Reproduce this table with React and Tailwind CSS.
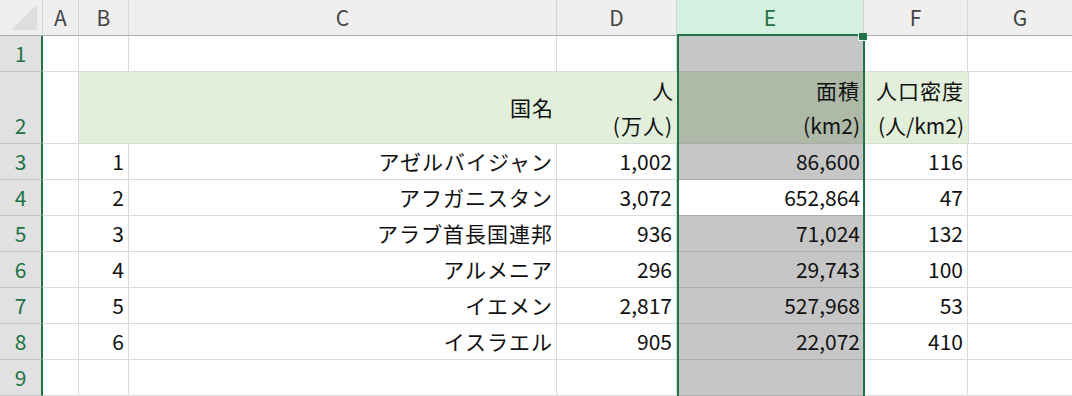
import React from "react";

const rows = [
  { no: 1, name: "アゼルバイジャン", pop: "1,002", area: "86,600", dens: "116" },
  { no: 2, name: "アフガニスタン", pop: "3,072", area: "652,864", dens: "47", active: true },
  { no: 3, name: "アラブ首長国連邦", pop: "936", area: "71,024", dens: "132" },
  { no: 4, name: "アルメニア", pop: "296", area: "29,743", dens: "100" },
  { no: 5, name: "イエメン", pop: "2,817", area: "527,968", dens: "53" },
  { no: 6, name: "イスラエル", pop: "905", area: "22,072", dens: "410" },
];

const RowHead = ({ n, tall }) => (
  <div
    className={`w-[43px] shrink-0 ${tall ? "h-[72px]" : "h-[36px]"} bg-[#e1e1e1] border-r-2 border-r-[#217346] border-b border-b-[#c6c6c6] text-[#217346] flex items-end justify-center leading-[35px]`}
  >
    {n}
  </div>
);

const ColHead = ({ label, w, selected }) => (
  <div
    className={`${w} h-[36px] shrink-0 border-r border-r-[#d6d6d6] border-b border-b-[#acacac] flex items-center justify-center ${
      selected ? "bg-[#d3f0e0] text-[#217346]" : "bg-[#efefef] text-[#444444]"
    }`}
  >
    {label}
  </div>
);

// empty row (row 1 and row 9)
const BlankRow = ({ n }) => (
  <div className="flex h-[36px]">
    <RowHead n={n} />
    <div className="w-[36px] border-r border-b border-[#dadada]" />
    <div className="w-[50px] border-r border-b border-[#dadada]" />
    <div className="w-[428px] border-r border-b border-[#dadada]" />
    <div className="w-[120px] border-r border-b border-[#dadada]" />
    <div className="w-[187px] bg-[#c6c6c6] border-b border-b-[#adadad]" />
    <div className="w-[104px] border-r border-b border-[#dadada]" />
    <div className="flex-1 border-b border-[#dadada]" />
  </div>
);

export default function App() {
  return (
    <div className="relative w-[1072px] h-[396px] overflow-hidden bg-white text-[#111111] text-[21px] font-['Noto_Sans_CJK_JP','Noto_Sans',sans-serif]">
      {/* column headings */}
      <div className="flex">
        <div className="w-[43px] h-[36px] shrink-0 bg-[#efefef] border-r border-r-[#d6d6d6] border-b border-b-[#acacac] flex items-end justify-end p-[4px]">
          <svg width="28" height="28" viewBox="0 0 28 28">
            <polygon points="27,1 27,27 1,27" fill="#dedede" />
          </svg>
        </div>
        <ColHead label="A" w="w-[36px]" />
        <ColHead label="B" w="w-[50px]" />
        <ColHead label="C" w="w-[428px]" />
        <ColHead label="D" w="w-[120px]" />
        <ColHead label="E" w="w-[187px]" selected />
        <ColHead label="F" w="w-[104px]" />
        <div className="flex-1 h-[36px] bg-[#efefef] text-[#444444] border-b border-b-[#acacac] flex items-center justify-center">
          G
        </div>
      </div>

      <BlankRow n={1} />

      {/* row 2: headings */}
      <div className="flex h-[72px]">
        <RowHead n={2} tall />
        <div className="w-[36px] border-r border-b border-[#dadada]" />
        <div className="w-[50px] bg-[#e2efda] border-b border-b-[#dadada]" />
        <div className="w-[428px] bg-[#e2efda] border-b border-b-[#dadada] flex items-center justify-end pr-[3px] tracking-[1px]">
          国名
        </div>
        <div className="w-[120px] bg-[#e2efda] border-b border-b-[#dadada] flex flex-col justify-end items-end pr-[4px] leading-[35px]">
          <span>人</span>
          <span className="tracking-[1px]">(万人)</span>
        </div>
        <div className="w-[187px] bg-[#aeb9a8] border-b border-b-[#adadad] flex flex-col justify-end items-end pr-[4px] leading-[35px]">
          <span className="tracking-[1px]">面積</span>
          <span>(km2)</span>
        </div>
        <div className="w-[104px] bg-[#e2efda] border-b border-b-[#dadada] flex flex-col justify-end items-end pr-[4px] leading-[35px]">
          <span className="tracking-[1px]">人口密度</span>
          <span>(人/km2)</span>
        </div>
        <div className="flex-1 border-b border-l border-[#dadada]" />
      </div>

      {rows.map((r, i) => (
        <div key={r.no} className="flex h-[36px] leading-[35px]">
          <RowHead n={i + 3} />
          <div className="w-[36px] border-r border-b border-[#dadada]" />
          <div className="w-[50px] border-r border-b border-[#dadada] flex items-center justify-end pr-[4px]">
            {r.no}
          </div>
          <div className="w-[428px] border-r border-b border-[#dadada] flex items-center justify-end pr-[3px] tracking-[1px]">
            {r.name}
          </div>
          <div className="w-[120px] border-r border-b border-[#dadada] flex items-center justify-end pr-[4px]">
            {r.pop}
          </div>
          <div
            className={`w-[187px] border-b border-b-[#adadad] flex items-center justify-end pr-[4px] ${
              r.active ? "bg-white" : "bg-[#c6c6c6]"
            }`}
          >
            {r.area}
          </div>
          <div className="w-[104px] border-r border-b border-[#dadada] flex items-center justify-end pr-[4px]">
            {r.dens}
          </div>
          <div className="flex-1 border-b border-[#dadada]" />
        </div>
      ))}

      <BlankRow n={9} />

      {/* selection border round column E */}
      <div className="absolute left-[677px] top-[34px] w-[188px] bottom-0 border-t-2 border-x-2 border-[#217346] pointer-events-none" />
      <div className="absolute left-[858px] top-[33px] w-[9px] h-[8px] bg-[#217346] border-l border-b border-white" />
    </div>
  );
}
